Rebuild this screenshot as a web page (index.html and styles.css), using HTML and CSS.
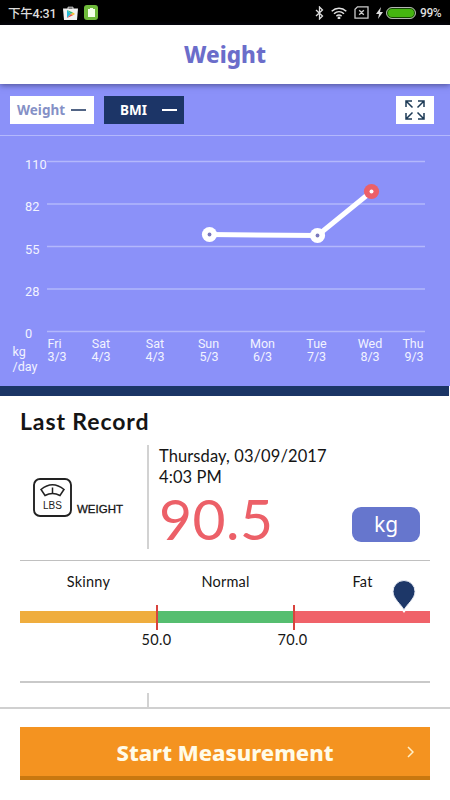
FILE: index.html
```html
<!DOCTYPE html>
<html lang="en">
<head>
    <meta charset="UTF-8">
    <meta name="viewport" content="width=device-width, initial-scale=1.0">
    <title>Weight</title>
    <link rel="stylesheet" href="styles.css">
</head>
<body>
    <div class="app">
        <!-- Status bar -->
        <div class="status-bar">
            <span class="clock">下午4:31</span>
            <svg class="store-icon" width="15" height="14" viewBox="0 0 15 14">
                <path d="M5 3V1.2h5V3" fill="none" stroke="#ddd"/>
                <path d="M0 2.5h15l-1 11.5H1z" fill="#f2f2f2"/>
                <path d="M4 4v8l4-4z" fill="#25b8d8"/>
                <path d="M4 4l4 4 2-1.5z" fill="#30b878"/>
                <path d="M4 12l4-4 2 1.3z" fill="#e64b48"/>
                <path d="M8 8l2-1.5L12 8l-2 1.3z" fill="#f5bc30"/>
            </svg>
            <svg class="app-icon" width="14" height="15" viewBox="0 0 14 15">
                <rect width="14" height="15" rx="3" fill="#6fba3b"/>
                <path d="M4 4h2V3h3v1h2v8H4z" fill="#f4ffe9"/>
            </svg>
            <div class="status-right">
                <svg width="9" height="14" viewBox="0 0 9 14" fill="none" stroke="#ddd" stroke-width="1.3">
                    <path d="M1 4l6.5 6L4.5 13V1l3 3L1 10"/>
                </svg>
                <svg class="wifi" width="16" height="12" viewBox="0 0 16 12" fill="none" stroke="#e2e2e2" stroke-width="1.5">
                    <path d="M.7 4.3c4.3-4 10.3-4 14.6 0M3 6.8c3-2.7 7-2.7 10 0M5.400 9.100c1.700-1.400 3.500-1.400 5.200 0"/>
                    <circle cx="8" cy="11" r=".7" fill="#e2e2e2"/>
                </svg>
                <svg class="sim" width="15" height="13" viewBox="0 0 15 13" fill="none" stroke="#ccc" stroke-width="1.3">
                    <path d="M3.500.8H14v11.400H1V3.300zM5.200 4.200l4.600 4.600M9.800 4.200L5.200 8.800"/>
                </svg>
                <svg class="bolt" width="7" height="12" viewBox="0 0 7 12">
                    <path d="M5 0L0 7h3l-1 5 5-7H4z" fill="#ddd"/>
                </svg>
                <span class="battery"></span>
                <span class="percent">99%</span>
            </div>
        </div>

        <div class="header">
            <h1>Weight</h1>
        </div>

        <!-- Chart -->
        <div class="chart-section">
            <div class="toolbar">
                <div class="tab tab-weight"><span>Weight</span><i></i></div>
                <div class="tab tab-bmi"><span>BMI</span><i></i></div>
                <div class="expand">
                    <svg width="20" height="20" viewBox="0 0 20 20" fill="none" stroke="#1d3a55" stroke-width="1.5">
                        <path d="M1 7V1h6M1 1l6.5 6.5M13 1h6v6M19 1l-6.5 6.5M1 13v6h6M1 19l6.5-6.5M19 13v6h-6M19 19l-6.5-6.5"/>
                    </svg>
                </div>
            </div>
            <svg class="chart" width="450" height="250" viewBox="0 0 450 250">
                <path class="grid-line" d="M47 25.5H425M47 68H425M47 110.5H425M47 153H425M47 195.5H425"/>
                <g class="y-labels">
                    <text x="25" y="32.5">110</text>
                    <text x="25" y="75">82</text>
                    <text x="25" y="117.5">55</text>
                    <text x="25" y="159.5">28</text>
                    <text x="25" y="202">0</text>
                </g>
                <g class="unit-labels">
                    <text x="12.5" y="220">kg</text>
                    <text x="12.5" y="235">/day</text>
                </g>
                <g class="x-labels">
                    <text x="54.5" y="211.5">Fri</text><text x="57" y="225">3/3</text>
                    <text x="101" y="211.5">Sat</text><text x="101" y="225">4/3</text>
                    <text x="155" y="211.5">Sat</text><text x="155" y="225">4/3</text>
                    <text x="208.500" y="211.5">Sun</text><text x="209" y="225">5/3</text>
                    <text x="262.500" y="211.5">Mon</text><text x="262.500" y="225">6/3</text>
                    <text x="316.500" y="211.5">Tue</text><text x="316.500" y="225">7/3</text>
                    <text x="370" y="211.5">Wed</text><text x="370" y="225">8/3</text>
                    <text x="413" y="211.5">Thu</text><text x="414" y="225">9/3</text>
                </g>
                <path class="data-line" d="M209.500 98.500L317.500 99.500L371.500 55.500"/>
                <circle cx="209.500" cy="98.500" r="7.600" fill="#fff"/>
                <circle cx="209.500" cy="98.500" r="1.900" fill="#7a78bd"/>
                <circle cx="317.500" cy="99.500" r="7.600" fill="#fff"/>
                <circle cx="317.500" cy="99.500" r="1.900" fill="#7a78bd"/>
                <circle cx="371.500" cy="55.500" r="7.600" fill="#ec6068"/>
                <circle cx="371.500" cy="55.500" r="2" fill="#fff"/>
            </svg>
        </div>
        <div class="divider"></div>

        <!-- Last record -->
        <div class="record">
            <h2>Last Record</h2>
            <div class="record-row">
                <div class="record-type">
                    <svg class="scale-icon" width="39" height="39" viewBox="0 0 39 39" fill="none" stroke="#222">
                        <rect x="1" y="1" width="37" height="37" rx="6" stroke-width="1.9"/>
                        <path d="M8 11.5Q19.500 2 31 11.500L27 17.500Q19.500 13.500 12 17.500z" stroke-width="1.6"/>
                        <path d="M19.500 9.500v6" stroke-width="1.500"/>
                        <text x="19.500" y="31">LBS</text>
                    </svg>
                    <span>WEIGHT</span>
                </div>
                <div class="record-data">
                    <div class="date">Thursday, 03/09/2017</div>
                    <div class="time">4:03 PM</div>
                    <div class="value">90.5</div>
                </div>
                <div class="unit">kg</div>
            </div>

            <div class="range">
                <div class="range-names">
                    <span>Skinny</span>
                    <span>Normal</span>
                    <span>Fat</span>
                </div>
                <div class="range-bar">
                    <div class="skinny"></div>
                    <div class="normal"></div>
                    <div class="fat"></div>
                    <svg class="marker" width="24" height="34" viewBox="0 0 24 34">
                        <path d="M9 29L12 33l3-4z" fill="#fff"/>
                        <path d="M12 30C9 24 1 19 1 11.500a11 11 0 0 1 22 0C23 19 15 24 12 30z" fill="#1d3768" stroke="#e9edf5"/>
                    </svg>
                </div>
                <div class="range-limits">
                    <span>50.0</span>
                    <span>70.0</span>
                </div>
            </div>
            <div class="next-record"></div>
        </div>

        <div class="footer">
            <button class="start">
                <span>Start Measurement</span>
                <svg class="arrow" width="7" height="12" viewBox="0 0 7 12" fill="none" stroke="#fff0c8" stroke-width="1.5">
                    <path d="M1 1l5 5-5 5"/>
                </svg>
            </button>
        </div>
    </div>
</body>
</html>
```
FILE: styles.css
```css
* {
    box-sizing: border-box;
}

body {
    margin: 0;
    background-color: #ffffff;
    color: #151515;
    font-family: Lato, "Noto Sans", sans-serif;
}

.app {
    width: 450px;
    height: 800px;
    display: flex;
    flex-direction: column;
    overflow: hidden;
}

/* Status bar */
.status-bar {
    height: 25px;
    display: flex;
    align-items: center;
    padding: 0 8px;
    background-color: #000000;
    color: #dddddd;
    font-family: Roboto, "Noto Sans CJK TC", sans-serif;
    font-size: 12.5px;
    font-weight: 500;
}

.clock {
    width: 49px;
    letter-spacing: -0.2px;
    white-space: nowrap;
}

.store-icon {
    margin-left: 6px;
}

.app-icon {
    margin-left: 6px;
}

.status-right {
    display: flex;
    align-items: center;
    margin-left: auto;
}

.wifi {
    margin-left: 7px;
}

.sim {
    margin-left: 7px;
}

.bolt {
    margin: 0 3px 0 7px;
}

.battery {
    width: 30px;
    height: 12px;
    border: 1px solid #b5b5b5;
    border-radius: 6px;
    background-color: #45b510;
    box-shadow: inset 0 0 0 1px #164503;
}

.percent {
    width: 22px;
    margin-left: 4px;
    font-size: 12px;
    letter-spacing: -0.4px;
}

.header {
    position: relative;
    height: 59px;
    background-color: #ffffff;
    box-shadow: 0 1px 6px rgba(30, 30, 70, 0.6);
    text-align: center;
}

.header h1 {
    margin: 0;
    font-family: "Noto Sans", sans-serif;
    font-size: 22.5px;
    font-weight: 800;
    line-height: 60px;
    color: #6b6dca;
}

/* Chart */
.chart-section {
    height: 302px;
    background-color: #8b91f9;
}

.toolbar {
    height: 52px;
    display: flex;
    padding: 12px 16px 0 10px;
    border-bottom: 1px solid #b3b8fc;
}

.tab {
    display: flex;
    align-items: center;
    justify-content: space-between;
    height: 28px;
    font-family: "Noto Sans", sans-serif;
    font-size: 13.5px;
    font-weight: bold;
}

.tab i {
    width: 15px;
    height: 2px;
    background-color: currentColor;
}

.tab-weight {
    width: 84px;
    padding: 0 8px 0 7px;
    background-color: #ffffff;
    color: #8590c6;
}

.tab-weight i {
    background-color: #526585;
}

.tab-bmi {
    width: 80px;
    margin-left: 10px;
    padding: 0 7px 0 16px;
    background-color: #1c3567;
    color: #ffffff;
}

.expand {
    width: 38px;
    height: 28px;
    display: flex;
    align-items: center;
    justify-content: center;
    margin-left: auto;
    background-color: #ffffff;
}

.chart {
    display: block;
    font-family: Roboto, sans-serif;
    font-size: 12.5px;
    fill: #f2f3ff;
}

.grid-line {
    stroke: #b3b8fc;
    stroke-width: 1.3;
}

.y-labels {
    font-size: 12.8px;
}

.x-labels {
    text-anchor: middle;
}

.data-line {
    fill: none;
    stroke: #ffffff;
    stroke-width: 5;
}

.divider {
    height: 10px;
    margin-right: 1px;
    background-color: #1b3566;
}

/* Last record */
.record {
    height: 311px;
    padding: 0 20px;
}

.record h2 {
    margin: 0;
    height: 49px;
    font-size: 23px;
    letter-spacing: 0.9px;
    line-height: 51px;
}

.record-row {
    height: 104px;
    display: flex;
}

.record-type {
    width: 129px;
    display: flex;
    align-items: flex-start;
    padding: 33px 0 0 13px;
    border-right: 2px solid #d2d2d2;
    font-family: "Liberation Sans", sans-serif;
    font-size: 11.5px;
}

.record-type span {
    margin: 25px 0 0 5px;
    -webkit-text-stroke: 0.3px #151515;
}

.scale-icon text {
    fill: #222222;
    stroke: none;
    font-size: 10px;
    text-anchor: middle;
}

.record-data {
    width: 190px;
    padding: 1px 0 0 10px;
    font-size: 16.5px;
    letter-spacing: 0.1px;
    line-height: 21px;
    white-space: nowrap;
}

.value {
    margin-top: 4px;
    color: #ec6068;
    font-size: 57px;
    letter-spacing: 0.5px;
    line-height: 53px;
}

.unit {
    width: 68px;
    height: 35px;
    margin: 62px 0 0 13px;
    border-radius: 9px;
    background-color: #6676cd;
    color: #ffffff;
    font-family: "Noto Sans", sans-serif;
    font-size: 21px;
    line-height: 34px;
    text-align: center;
}

.range {
    height: 123px;
    margin-top: 11px;
    border-top: 1px solid #c0c0c0;
    border-bottom: 2px solid #c9c9c9;
    font-size: 14.5px;
}

.range-names {
    height: 50px;
    display: grid;
    grid-template-columns: repeat(3, 137px);
    line-height: 41px;
    letter-spacing: 0.2px;
    text-align: center;
}

.range-bar {
    position: relative;
    height: 12px;
    display: grid;
    grid-template-columns: 137px 137px 136px;
    grid-template-rows: 12px;
}

.skinny {
    background-color: #efad3e;
}

.normal {
    background-color: #56be70;
}

.fat {
    background-color: #f06269;
}

/* Limit ticks stick out of the bar on both sides */
.normal::before,
.fat::before {
    content: "";
    display: block;
    width: 2px;
    height: 25px;
    margin: -6px 0 0 -1px;
    background-color: #d9433e;
}

.marker {
    position: absolute;
    left: 372px;
    top: -31px;
}

.range-limits {
    display: flex;
    padding-left: 106px;
    line-height: 34px;
}

.range-limits span {
    width: 61px;
    margin-right: 75px;
    letter-spacing: 0.3px;
    text-align: center;
}

.next-record {
    width: 129px;
    height: 14px;
    margin-top: 10px;
    border-right: 2px solid #d2d2d2;
}

.footer {
    position: relative;
    height: 93px;
    padding: 18px 20px 0;
    border-top: 2px solid #d0d0d0;
    background-color: #ffffff;
}

.start {
    position: relative;
    width: 100%;
    height: 53px;
    padding: 0;
    border: none;
    border-bottom: 4px solid #c87810;
    background-color: #f49320;
    color: #fffbe8;
    font-family: "Noto Sans", sans-serif;
    font-size: 22px;
    font-weight: 800;
}

.arrow {
    position: absolute;
    right: 16px;
    top: 19px;
}
```
